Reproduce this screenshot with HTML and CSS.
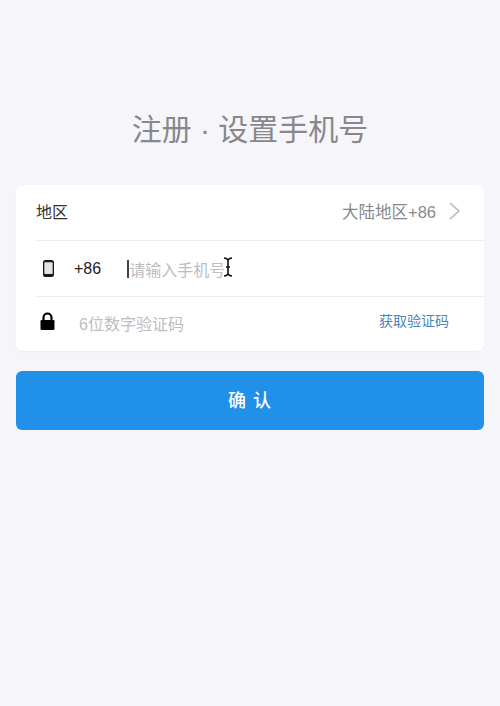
FILE: index.html
```html
<!DOCTYPE html>
<html lang="zh-CN">
<head>
    <meta charset="UTF-8">
    <meta name="viewport" content="width=device-width, initial-scale=1.0">
    <title>注册</title>
    <link rel="stylesheet" href="styles.css">
</head>
<body>
    <div class="page">
        <h1 class="page-title">注册 · 设置手机号</h1>
        <div class="form-card">
            <div class="form-row region-row">
                <span class="row-label">地区</span>
                <span class="region-value">大陆地区+86</span>
                <svg class="chevron" width="14" height="20" viewBox="0 0 14 20">
                    <path d="M2 2l9 8-9 8" fill="none" stroke="#c4c4c6" stroke-width="1.7"/>
                </svg>
            </div>
            <div class="form-row phone-row">
                <svg class="phone-icon" width="11" height="17" viewBox="0 0 11 17">
                    <path fill-rule="evenodd" fill="#1a1a1a" d="M2.500 0h6A2.500 2.500 0 0 1 11 2.500v12A2.500 2.500 0 0 1 8.500 17h-6A2.500 2.500 0 0 1 0 14.500v-12A2.500 2.500 0 0 1 2.500 0zM1.600 2.600v11.200h7.800V2.600z"/>
                    <rect x="1.600" y="2.600" width="7.800" height="11.200" fill="#e4e4e6"/>
                </svg>
                <span class="country-code">+86</span>
                <span class="caret"></span>
                <span class="placeholder">请输入手机号</span>
                <svg class="text-cursor" width="10" height="20" viewBox="0 0 10 20">
                    <path d="M1 1c2 0 3 .5 4 2v14c-1 1.500-2 2-4 2M9 1c-2 0-3 .5-4 2M9 19c-2 0-3-.5-4-2M3 10h4" fill="none" stroke="#111" stroke-width="1.600"/>
                </svg>
            </div>
            <div class="form-row code-row">
                <svg class="lock-icon" width="15" height="18" viewBox="0 0 15 18">
                    <path d="M3.500 9V5.500a4 4 0 0 1 8 0V9" fill="none" stroke="#000" stroke-width="2.200"/>
                    <rect x="0.500" y="8" width="14" height="10" rx="1.200" fill="#000"/>
                </svg>
                <span class="placeholder code-placeholder">6位数字验证码</span>
                <span class="get-code">获取验证码</span>
            </div>
        </div>
        <button class="confirm-button" type="button">确 认</button>
    </div>
</body>
</html>
```

FILE: styles.css
```css
html, body {
    margin: 0;
    height: 100%;
}

body {
    font-family: "Liberation Sans", "Noto Sans CJK SC", sans-serif;
    background-color: #f6f5fa;
    color: #222;
    overflow: hidden;
}

.page {
    padding: 108px 16px 0;
}

.page-title {
    margin: 0 0 33px;
    font-size: 30px;
    line-height: 44px;
    font-weight: 400;
    text-align: center;
    color: #88888c;
}

.form-card {
    height: 166px;
    padding-left: 20px;
    background-color: #fff;
    border-radius: 7px;
    box-shadow: 0 1px 2px rgba(0, 0, 0, 0.04);
}

.form-row {
    display: flex;
    align-items: center;
    box-sizing: border-box;
    height: 56px;
    border-bottom: 1px solid #ececef;
    font-size: 16px;
}

.region-row {
    padding-bottom: 3px;
}

.code-row {
    height: 54px;
    padding-bottom: 3px;
    border-bottom: none;
}

.row-label {
    flex: 1;
    color: #333;
}

.region-value {
    font-size: 16.500px;
    color: #88888c;
}

.chevron {
    margin: 0 22px 0 12px;
}

.phone-icon {
    margin-left: 7px;
}

.country-code {
    margin-left: 20px;
    color: #222;
}

.caret {
    width: 2px;
    height: 18px;
    margin-left: 26px;
    background-color: #444;
}

.placeholder {
    color: #bdbdc0;
}

.text-cursor {
    margin: -4px 0 0 -2px;
}

.lock-icon {
    margin-left: 4px;
    margin-top: -3px;
}

.code-placeholder {
    flex: 1;
    margin-left: 24px;
}

.get-code {
    margin-right: 35px;
    margin-top: -6px;
    font-size: 14px;
    color: #4a86bb;
}

.confirm-button {
    display: block;
    width: 100%;
    height: 59px;
    margin-top: 20px;
    padding: 0 0 4px;
    border: none;
    border-radius: 6px;
    background-color: #2090e8;
    color: #fff;
    font-family: inherit;
    font-size: 18px;
    font-weight: 500;
    letter-spacing: 1px;
}
```
